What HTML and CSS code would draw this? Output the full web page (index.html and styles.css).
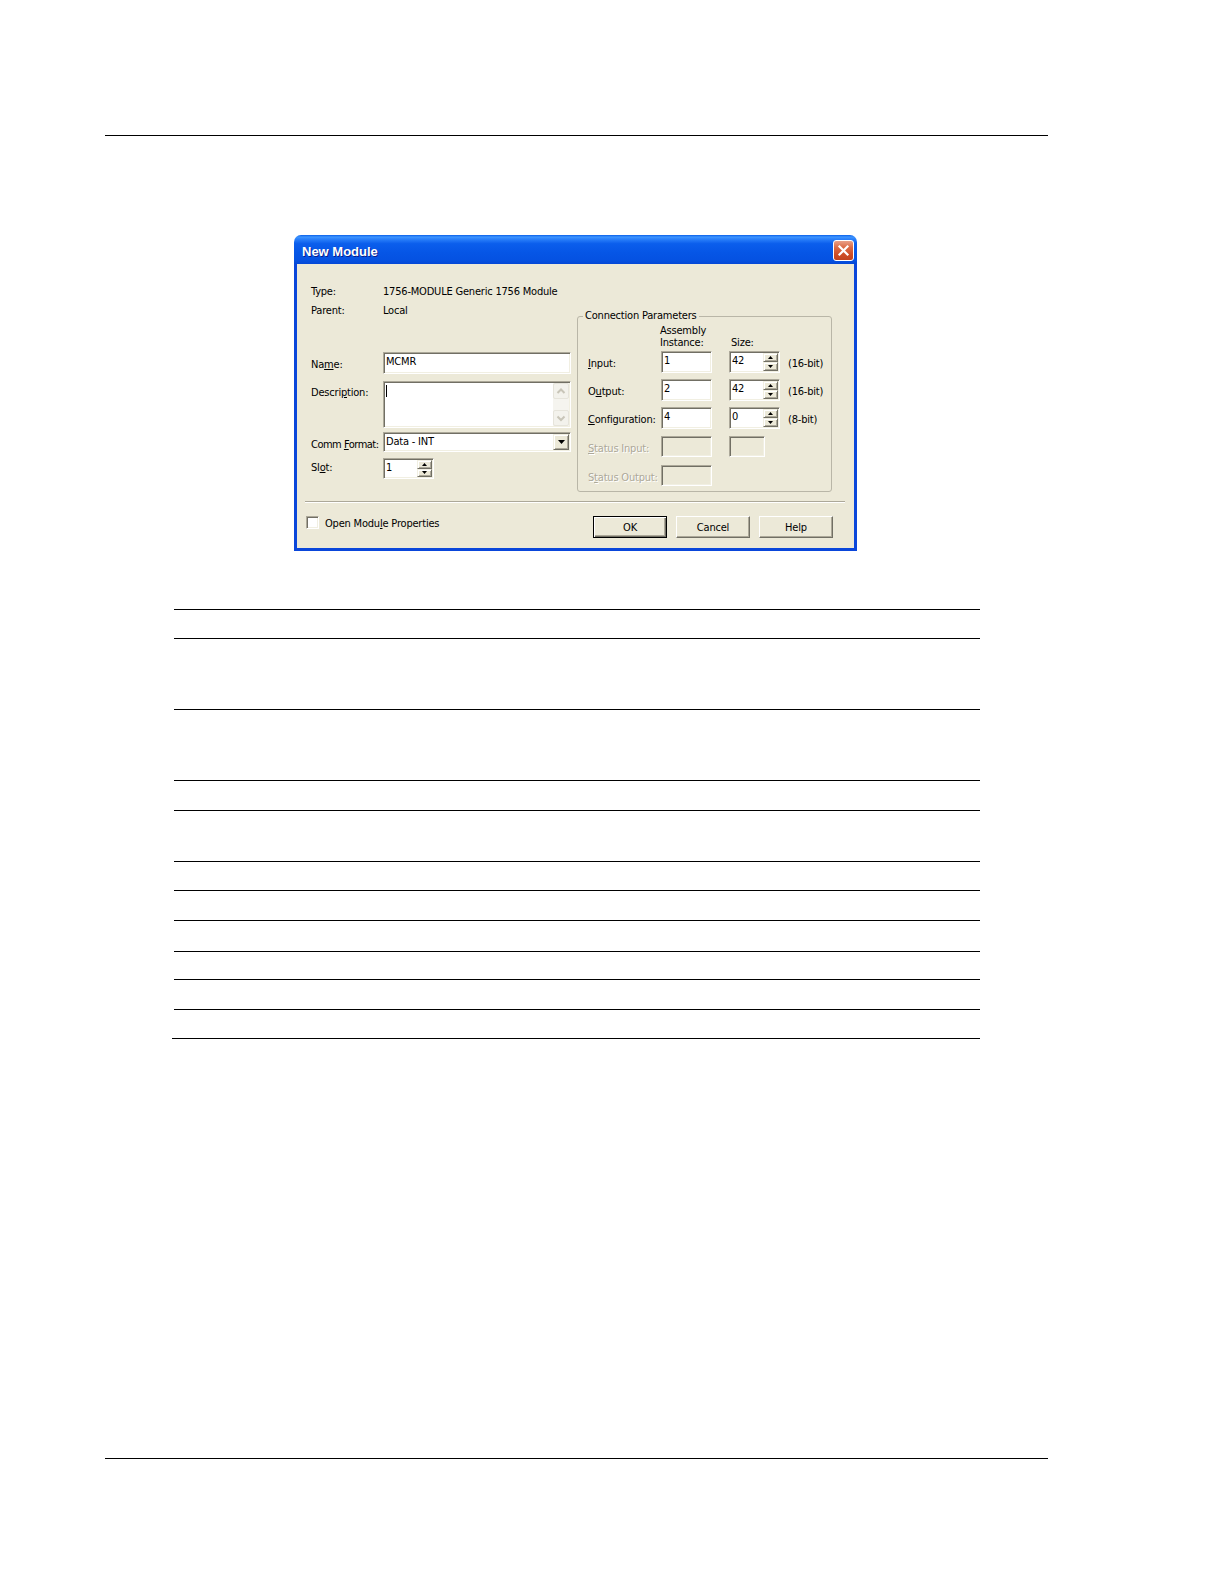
FILE: index.html
```html
<!DOCTYPE html>
<html>
<head>
<meta charset="utf-8">
<title>New Module</title>
<link rel="stylesheet" href="styles.css">
</head>
<body>
<div class="page">
  <div class="rule rule-top"></div>

  <div class="dialog">
    <div class="titlebar">
      <span class="title">New Module</span>
      <span class="close">
        <svg width="13" height="13" viewBox="0 0 13 13"><path d="M2.5 2.5L10.5 10.5M10.5 2.5L2.5 10.5" stroke="#fff" stroke-width="2.2" stroke-linecap="square" fill="none"/></svg>
      </span>
    </div>
    <div class="dlg-body">
      <div class="dlg-main">
        <div class="left-col">
          <div class="info-row"><span class="lbl">Type:</span><span>1756-MODULE Generic 1756 Module</span></div>
          <div class="info-row"><span class="lbl">Parent:</span><span>Local</span></div>

          <div class="form-row row-name">
            <span class="lbl">Na<u>m</u>e:</span>
            <div class="field name-field">MCMR</div>
          </div>

          <div class="form-row row-desc">
            <span class="lbl">Descri<u>p</u>tion:</span>
            <div class="field desc-field">
              <span class="caret"></span>
              <div class="vscroll">
                <span class="sbtn"><svg width="14" height="14" viewBox="0 0 14 14"><path d="M3.5 9L7 5.5L10.5 9" stroke="#C8C5B8" stroke-width="2" fill="none"/></svg></span>
                <span class="sbtn"><svg width="14" height="14" viewBox="0 0 14 14"><path d="M3.5 5.5L7 9L10.5 5.5" stroke="#C8C5B8" stroke-width="2" fill="none"/></svg></span>
              </div>
            </div>
          </div>

          <div class="form-row row-comm">
            <span class="lbl lbl-tight">Comm <u>F</u>ormat:</span>
            <div class="field combo">
              <span class="combo-text">Data - INT</span>
              <span class="drop-btn raised"><svg width="7" height="4" viewBox="0 0 7 4"><path d="M0 0H7L3.5 4Z" fill="#000"/></svg></span>
            </div>
          </div>

          <div class="form-row row-slot">
            <span class="lbl">Sl<u>o</u>t:</span>
            <div class="field spin slot-spin">
              <span class="spin-text">1</span>
              <span class="spin-btns">
                <span class="spin-b raised"><svg width="5" height="3" viewBox="0 0 5 3"><path d="M0 3H5L2.5 0Z" fill="#000"/></svg></span>
                <span class="spin-b raised"><svg width="5" height="3" viewBox="0 0 5 3"><path d="M0 0H5L2.5 3Z" fill="#000"/></svg></span>
              </span>
            </div>
          </div>
        </div>

        <fieldset class="group">
          <legend>Connection Parameters</legend>
          <div class="param-grid">
            <div></div>
            <div class="hdr">Assembly<br>Instance:</div>
            <div class="hdr hdr-size">Size:</div>
            <div></div>

            <div class="plbl"><u>I</u>nput:</div>
            <div><div class="field inst">1</div></div>
            <div>
              <div class="field spin size-spin">
                <span class="spin-text">42</span>
                <span class="spin-btns">
                  <span class="spin-b raised"><svg width="5" height="3" viewBox="0 0 5 3"><path d="M0 3H5L2.5 0Z" fill="#000"/></svg></span>
                  <span class="spin-b raised"><svg width="5" height="3" viewBox="0 0 5 3"><path d="M0 0H5L2.5 3Z" fill="#000"/></svg></span>
                </span>
              </div>
            </div>
            <div class="plbl">(16-bit)</div>

            <div class="plbl">O<u>u</u>tput:</div>
            <div><div class="field inst">2</div></div>
            <div>
              <div class="field spin size-spin">
                <span class="spin-text">42</span>
                <span class="spin-btns">
                  <span class="spin-b raised"><svg width="5" height="3" viewBox="0 0 5 3"><path d="M0 3H5L2.5 0Z" fill="#000"/></svg></span>
                  <span class="spin-b raised"><svg width="5" height="3" viewBox="0 0 5 3"><path d="M0 0H5L2.5 3Z" fill="#000"/></svg></span>
                </span>
              </div>
            </div>
            <div class="plbl">(16-bit)</div>

            <div class="plbl"><u>C</u>onfiguration:</div>
            <div><div class="field inst">4</div></div>
            <div>
              <div class="field spin size-spin">
                <span class="spin-text">0</span>
                <span class="spin-btns">
                  <span class="spin-b raised"><svg width="5" height="3" viewBox="0 0 5 3"><path d="M0 3H5L2.5 0Z" fill="#000"/></svg></span>
                  <span class="spin-b raised"><svg width="5" height="3" viewBox="0 0 5 3"><path d="M0 0H5L2.5 3Z" fill="#000"/></svg></span>
                </span>
              </div>
            </div>
            <div class="plbl">(8-bit)</div>

            <div class="plbl disabled"><u>S</u>tatus Input:</div>
            <div><div class="field inst off"></div></div>
            <div><div class="field size-off off"></div></div>
            <div></div>

            <div class="plbl disabled">S<u>t</u>atus Output:</div>
            <div><div class="field inst off"></div></div>
            <div></div>
            <div></div>
          </div>
        </fieldset>
      </div>

      <div class="separator"></div>

      <div class="footer">
        <div class="chk-wrap">
          <span class="checkbox"></span>
          <span class="chk-label">Open Modu<u>l</u>e Properties</span>
        </div>
        <div class="buttons">
          <span class="btn btn-default">OK</span>
          <span class="btn">Cancel</span>
          <span class="btn">Help</span>
        </div>
      </div>
    </div>
  </div>

  <div class="table">
    <div class="trow h29"></div>
    <div class="trow h71"></div>
    <div class="trow h71"></div>
    <div class="trow h30"></div>
    <div class="trow h51"></div>
    <div class="trow h29"></div>
    <div class="trow h30"></div>
    <div class="trow h31"></div>
    <div class="trow h28"></div>
    <div class="trow h30"></div>
    <div class="trow h29"></div>
    <div class="table-end"></div>
  </div>

  <div class="rule rule-bottom"></div>
</div>
</body>
</html>
```

FILE: styles.css
```css
* { box-sizing: border-box; }

body {
  margin: 0;
  background: #fff;
  font-family: "DejaVu Sans Condensed", "DejaVu Sans", sans-serif;
  font-stretch: condensed;
  font-size: 11px;
  letter-spacing: -0.2px;
  color: #000;
}

.page {
  width: 1224px;
  height: 1584px;
  overflow: hidden;
}

.rule {
  height: 1px;
  background: #000;
}
.rule-top { margin: 135px 0 0 105px; width: 943px; }
.rule-bottom { margin: 419px 0 0 105px; width: 943px; }

/* ---------- dialog ---------- */
.dialog {
  margin: 99px 0 0 294px;
  width: 563px;
}

.titlebar {
  height: 29px;
  border-radius: 7px 7px 0 0;
  background: linear-gradient(to bottom,
    #0A5FE8 0%, #3D95FF 7%, #2A80FA 14%, #0B5EEC 30%,
    #0656E6 60%, #0552E2 85%, #0448D6 100%);
  display: flex;
  justify-content: space-between;
  align-items: flex-start;
  padding: 5px 3px 0 8px;
}

.title {
  font-family: "Liberation Sans", Arial, sans-serif;
  font-stretch: normal;
  letter-spacing: 0;
  font-weight: bold;
  font-size: 13px;
  line-height: 18px;
  margin-top: 3px;
  color: #fff;
  text-shadow: 1px 1px 0 #0A1E8C;
}

.close {
  width: 21px;
  height: 21px;
  border: 1px solid #fff;
  border-radius: 3px;
  background: linear-gradient(to bottom, #E9A088 0%, #DB6A45 35%, #CF4E27 70%, #C2431F 100%);
  display: flex;
  align-items: center;
  justify-content: center;
}

.dlg-body {
  background: #ECE9D8;
  border: 3px solid #0A46DA;
  border-top: 0;
  padding: 18px 0 10px 0;
}

.dlg-main {
  display: flex;
  gap: 6px;
  padding: 0 22px 0 14px;
  align-items: flex-start;
}

.left-col {
  width: 260px;
  display: flex;
  flex-direction: column;
}

.info-row {
  display: flex;
  height: 19px;
  line-height: 19px;
  white-space: nowrap;
}

.lbl {
  width: 72px;
  flex: none;
  white-space: nowrap;
}
.lbl-tight { letter-spacing: -0.5px; }

.form-row {
  display: flex;
  align-items: flex-start;
}
.form-row .lbl { line-height: 14px; padding-top: 6px; }

.row-name { margin-top: 32px; }
.row-desc { margin-top: 7px; }
.row-desc .lbl { padding-top: 5px; }
.row-comm { margin-top: 4px; }
.row-slot { margin-top: 6px; }
.row-slot .lbl { padding-top: 3px; }

/* sunken edit field */
.field {
  background: #fff;
  border: 1px solid;
  border-color: #ACA899 #fff #fff #ACA899;
  box-shadow: inset 1px 1px 0 #716F64, inset -1px -1px 0 #F1EFE2;
  padding: 1px 2px;
  line-height: 16px;
  white-space: nowrap;
}
.field.off { background: #ECE9D8; }

.name-field { flex: 1; height: 22px; }

.desc-field {
  flex: 1;
  height: 47px;
  display: flex;
  justify-content: space-between;
  padding: 1px 1px 1px 2px;
}
.caret {
  width: 1px;
  height: 12px;
  margin-top: 2px;
  background: #000;
}
.vscroll {
  width: 16px;
  display: flex;
  flex-direction: column;
  justify-content: space-between;
  background: #F5F4EF;
}
.sbtn {
  width: 16px;
  height: 16px;
  border: 1px solid #E6E4DB;
  border-radius: 2px;
  background: #F3F2EC;
  display: flex;
  align-items: center;
  justify-content: center;
}

.combo {
  flex: 1;
  height: 20px;
  display: flex;
  justify-content: space-between;
  padding: 1px 1px 1px 2px;
  line-height: 16px;
}

.raised {
  background: #ECE9D8;
  border: 1px solid;
  border-color: #F1EFE2 #716F64 #716F64 #F1EFE2;
  box-shadow: inset 1px 1px 0 #fff, inset -1px -1px 0 #ACA899;
}

.drop-btn {
  width: 16px;
  height: 16px;
  display: flex;
  align-items: center;
  justify-content: center;
}

.spin {
  display: flex;
  justify-content: space-between;
  padding: 1px 1px 1px 2px;
}
.slot-spin { width: 51px; height: 21px; }
.size-spin { width: 51px; height: 22px; }
.spin-btns {
  width: 15px;
  display: flex;
  flex-direction: column;
}
.spin-b {
  flex: 1;
  display: flex;
  align-items: center;
  justify-content: center;
}

/* ---------- group box ---------- */
.group {
  margin: 27px 0 0 0;
  padding: 2px 0 5px 10px;
  width: 255px;
  min-width: 0;
  border: 1px solid #B9B6A7;
  border-radius: 3px;
}
.group legend {
  padding: 0 2px;
  margin-left: -5px;
  line-height: 14px;
}

.param-grid {
  display: grid;
  grid-template-columns: 73px 68px 59px auto;
  grid-template-rows: 26px 28px 28px 29px 29px 21px;
}
.hdr {
  line-height: 12px;
  margin-left: -1px;
}
.hdr-size {
  margin-left: 2px;
  padding-top: 12px;
}
.plbl {
  line-height: 14px;
  padding-top: 6px;
  white-space: nowrap;
}
.disabled {
  color: #ACA899;
  text-shadow: 1px 1px 0 #fff;
}
.inst { width: 51px; height: 22px; }
.inst.off { height: 21px; }
.size-off { width: 36px; height: 21px; }

/* ---------- footer ---------- */
.separator {
  margin: 9px 9px 0 8px;
  border-top: 1px solid #ACA899;
  border-bottom: 1px solid #fff;
}

.footer {
  display: flex;
  align-items: flex-start;
  margin-top: 13px;
  padding: 0 21px 0 9px;
  height: 22px;
}
.chk-wrap {
  display: flex;
  align-items: flex-start;
  gap: 6px;
}
.checkbox {
  width: 13px;
  height: 13px;
  background: #fff;
  border: 1px solid;
  border-color: #ACA899 #fff #fff #ACA899;
  box-shadow: inset 1px 1px 0 #716F64, inset -1px -1px 0 #F1EFE2;
}
.chk-label {
  line-height: 13px;
  padding-top: 1px;
  white-space: nowrap;
}
.buttons {
  margin-left: auto;
  display: flex;
  gap: 9px;
}
.btn {
  width: 74px;
  height: 22px;
  display: flex;
  align-items: center;
  justify-content: center;
  background: #ECE9D8;
  border: 1px solid;
  border-color: #fff #716F64 #716F64 #fff;
  box-shadow: inset -1px -1px 0 #ACA899;
}
.btn-default {
  border: 1px solid #000;
  box-shadow: inset 1px 1px 0 #fff, inset -1px -1px 0 #716F64, inset -2px -2px 0 #ACA899;
}

/* ---------- table ---------- */
.table {
  margin: 58px 0 0 174px;
  width: 806px;
}
.trow { border-top: 1px solid #000; }
.h28 { height: 28px; }
.h29 { height: 29px; }
.h30 { height: 30px; }
.h31 { height: 31px; }
.h51 { height: 51px; }
.h71 { height: 71px; }
.table-end {
  height: 1px;
  background: #000;
  margin-left: -2px;
  width: 808px;
}
```
